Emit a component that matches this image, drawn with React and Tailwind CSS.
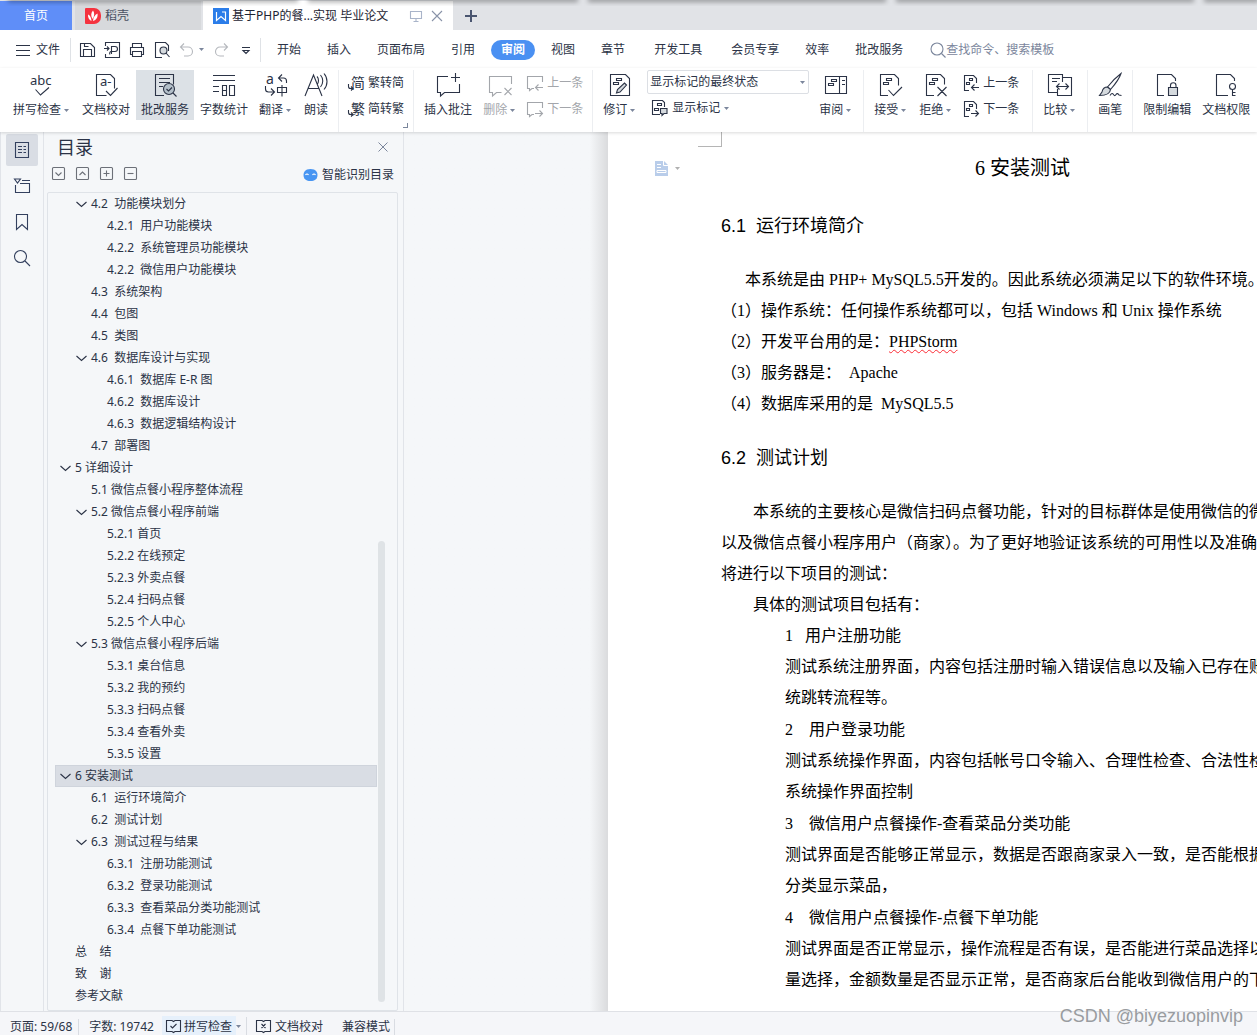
import React, { useState } from 'react';

const UI_FONT = "font-['Noto_Sans','Noto_Sans_CJK_SC',sans-serif]";

const Caret = ({ className = 'text-[#7b869c]' }) => (
  <svg width="5" height="3" viewBox="0 0 5 3" className={`shrink-0 ${className}`} fill="currentColor">
    <path d="M0 0h5L2.5 3z" />
  </svg>
);

const Icon = ({ size = 24, children, className = '' }) => (
  <svg
    width={size}
    height={size}
    viewBox={`0 0 ${size} ${size}`}
    fill="none"
    stroke="currentColor"
    strokeWidth="1.1"
    className={`shrink-0 overflow-visible ${className}`}
    aria-hidden="true"
  >
    {children}
  </svg>
);

const SvgText = ({ x, y, size, children }) => (
  <text x={x} y={y} fontSize={size} fill="currentColor" stroke="none" className="font-['Noto_Sans','Noto_Sans_CJK_SC',sans-serif]">
    {children}
  </text>
);

// ---- 24px ribbon icons ----
const SpellIcon = () => (
  <Icon>
    <SvgText x="0" y="12" size="13">abc</SvgText>
    <path d="M5.5 16.5l5 5.5 8.5-7.5" />
  </Icon>
);
const ProofIcon = () => (
  <Icon>
    <path d="M12.5 22.5h-10V1.5h14l4 4v10" />
    <SvgText x="6" y="13" size="13">a-</SvgText>
    <path d="M12 18l4.5 4.5 7-7.5" />
  </Icon>
);
const CorrectIcon = () => (
  <Icon>
    <path d="M11 22.5H2.5V1.5h18v10M6 5.5h11M6 9.5h11M6 13.5h4" />
    <circle cx="16" cy="16" r="5.5" fill="#b3bfc9" />
    <path d="M13.5 16l2 2 3.5-3.5M20 20l3.5 3.5" />
  </Icon>
);
const CountIcon = () => (
  <Icon>
    <path d="M1 2.5h22M1 7.5h22M1 13.5h6M1 18.5h6M10.5 12.5h4v10h-4zM10.5 17.5h4M17.5 12.5h5v10h-5z" />
  </Icon>
);
const TranslateIcon = () => (
  <Icon>
    <SvgText x="2" y="11" size="14">a</SvgText>
    <path d="M18 1.5l-3.5 3.5 3.5 3.5M14.5 5h5a3 3 0 0 1 3 3v2M1.5 13v3a3 3 0 0 0 3 3H10M7 15.5l3.5 3.5L7 22.5M13.5 14.5h9v5h-9zM18 12v11.5" />
  </Icon>
);
const ReadIcon = () => (
  <Icon>
    <path d="M1 23L9.5 2 18 23M4 15.5h11M13 3.5c2 2 2 6 0 8M16.5 2c3 3.5 3 8.5 0 12M20 .5c4 4.5 4 11.5 0 16" />
  </Icon>
);
const AddCommentIcon = () => (
  <Icon>
    <path d="M12 3.5H1.5v16h3v3.5l4-3.5h15V11M19.5 0v9M15 4.5h9" />
  </Icon>
);
const DelCommentIcon = () => (
  <Icon>
    <path d="M23.5 11V3.5h-22v16h3v3.5l4-3.5h5M16.5 15l7 7M23.5 15l-7 7" />
  </Icon>
);
const ReviseIcon = () => (
  <Icon>
    <path d="M2.5 1.5h15l4 4v17h-19zM8.5 5.5h5v2h-5zM5.500 9.5h5v2h-5z" />
    <path d="M8.5 20l1-3.500 7-6.500 2 2-6.500 7z" fill="#d5dade" />
  </Icon>
);
const PaneIcon = () => (
  <Icon>
    <path d="M1.5 3.5h21v17h-21zM15.5 3.5v17M18 7.5h3M18 11.5h3M7.5 6.5h5v2h-5zM4.5 10.5h5v2h-5z" />
  </Icon>
);
const AcceptIcon = () => (
  <Icon>
    <path d="M9 22.5H1.5V1.5h14l4 4v7M7.5 5.5h5v2h-5zM4.5 9.5h5v2h-5zM9.5 17l5 5.5 8.5-8.5" />
  </Icon>
);
const RejectIcon = () => (
  <Icon>
    <path d="M10 22.5H2.5V1.5h14l4 4v6M8.5 5.5h5v2h-5zM5.5 9.5h5v2h-5zM13.5 14l9 9M22.5 14l-9 9" />
  </Icon>
);
const CompareIcon = () => (
  <Icon>
    <path d="M9 19.5H.5v-18h14V5M14.5 9V4.5h9v18h-14V16M4 5.5h8M4 8.5h5M8.5 13.5h12M11.5 10.5l-3 3 3 3M17.5 10.5l3 3-3 3" />
  </Icon>
);
const BrushIcon = () => (
  <Icon>
    <path d="M23 .5c-4 3-10 9-13.5 13.5l3 2.5C16.5 12 21.5 5 23 .5z" />
    <path d="M9.5 14c-3 0-5 2.5-5.5 5L1.500 22.500c5 0 10.500-1 11-6z" fill="#d5dade" />
    <path d="M12 22.500c1.500-2.500 2.500-2.500 3.500-1s1.500 1.500 2.500 0 2-1 3 .5l2.500.5" />
  </Icon>
);
const LockDocIcon = () => (
  <Icon>
    <path d="M9 22.5H2.5v-21h14l4 4V8M15.5 15v-2.5a2.5 2.5 0 0 1 5.5 0V15" />
    <path d="M13.5 14.5h9v8h-9z" fill="#d5dade" />
  </Icon>
);
const KeyDocIcon = () => (
  <Icon>
    <path d="M14 22.5H2.5v-21h14l4 4V8" />
    <circle cx="18.5" cy="13.5" r="3" />
    <path d="M18.5 16.5v6.500M18.5 19.5h3M18.5 22.5h3" />
  </Icon>
);

// ---- 16px icons ----
const ConvertIcon = ({ char }) => (
  <Icon size={16}>
    <SvgText x="3" y="13" size="14">{char}</SvgText>
    <path d="M.5 9v2.5a2 2 0 0 0 2 2H5M3 11.5l2 2-2 2" />
  </Icon>
);
const CommentNav = ({ next }) => (
  <Icon size={16}>
    <path d="M15.5 7V1.5H.5v12h2v2l2.5-2h2" />
    <path d={next ? 'M8 12.5h7.5M12.5 9.5l3 3-3 3' : 'M8.5 12.5H16M11.5 9.5l-3 3 3 3'} />
  </Icon>
);
const RevisionNav = ({ next }) => (
  <Icon size={16}>
    <path d="M6 15.5H1.5V.5h9l3 3V8M6.5 3.5h3v2h-3zM3.5 7.5h3v2h-3z" />
    <path d={next ? 'M8 12.5h7.5M12.5 9.5l3 3-3 3' : 'M8.5 12.5H16M11.5 9.5l-3 3 3 3'} />
  </Icon>
);
const MarkIcon = () => (
  <Icon size={16}>
    <path d="M8 14.5H.5V.5h10l2 2V7M5.5 3.5h4v2h-4zM2.5 8.5h4v2h-4z" />
    <path d="M8.5 8.500h6.500v5h-3l-2 2v-2H8.500z" fill="#d5dade" />
  </Icon>
);

const BigButton = ({ icon, label, caret, active, disabled }) => (
  <button
    disabled={disabled}
    className={`flex h-[50px] flex-col items-center gap-[5px] px-[5px] pt-[3px] whitespace-nowrap ${
      active ? 'bg-[#dce1e6]' : ''
    } ${disabled ? 'text-[#a3a6ab]' : ''}`}
  >
    {icon}
    <span className="flex items-center text-xs leading-4">
      {label}
      {caret && (
        <span className="mr-[2px] ml-[3px]">
          <Caret />
        </span>
      )}
    </span>
  </button>
);

const SmallButton = ({ icon, label, caret, disabled }) => (
  <button
    disabled={disabled}
    className={`flex h-[26px] items-center gap-1 text-xs whitespace-nowrap ${disabled ? 'text-[#a3a6ab]' : ''}`}
  >
    {icon}
    {label}
    {caret && <Caret />}
  </button>
);

const Separator = () => <div className="mx-1 h-[62px] w-px shrink-0 bg-[#eceef1]" />;

const TitleBar = () => (
  <header className="relative flex h-[30px] shrink-0 bg-[#e1e3e7] pt-px text-xs">
    <button className="mr-[3px] w-[72px] bg-[#5f8ef8] text-white">首页</button>
    <button className="mr-[2px] flex w-[126px] items-center gap-1 bg-[#d7d9dc] pl-[10px] text-[#4a5163]">
      <svg width="16" height="16" viewBox="0 0 16 16" aria-hidden="true">
        <path d="M1 0h8a7 7 0 0 1 7 7v2a7 7 0 0 1-7 7H1a1 1 0 0 1-1-1V1a1 1 0 0 1 1-1z" fill="#f5333f" />
        <path d="M8 2.5c1.500 2 1.800 5-.3 8.500-2-2.500-2-6 .3-8.500zM3 6.500c2 .8 3.300 3 3.500 6.500C4 12 2.800 9.500 3 6.500zM12.500 5.500c.6 3.500-1 6.500-4.500 7.500.2-3.500 1.800-6 4.500-7.500z" fill="#fff" />
      </svg>
      稻壳
    </button>
    <div className="flex w-[250px] items-center bg-white pl-[10px] text-[#1d2433]">
      <svg width="16" height="16" viewBox="0 0 16 16" className="mr-[3px] shrink-0" aria-hidden="true">
        <path d="M0 0h16v16H0z" fill="#2b7de9" />
        <path d="M3.500 4v8.500L8 8.500l4.500 4V4H9" fill="none" stroke="#fff" strokeWidth="1.200" />
      </svg>
      <span className="whitespace-nowrap">基于PHP的餐...实现 毕业论文</span>
      <button className="ml-auto text-[#a9b4c9]" aria-label="窗口">
        <Icon size={12}>
          <path d="M.5 1.5h11v7H.5zM6 8.5v3M3.5 11.5h5" />
        </Icon>
      </button>
      <button className="mr-[10px] ml-[9px] text-[#8993a8]" aria-label="关闭">
        <Icon size={12}>
          <path d="M1 1l10 10M11 1L1 11" />
        </Icon>
      </button>
    </div>
    <button className="ml-3 text-[#4a5570]" aria-label="新建">
      <Icon size={12}>
        <path d="M6 0v12M0 6h12" strokeWidth="2" />
      </Icon>
    </button>
    {/* shadow cast by the windows above */}
    <div className="pointer-events-none absolute inset-x-0 top-0 flex h-[6px] gap-[14px] overflow-hidden pl-[10px]">
      <span className="-mt-px h-px w-[286px] shadow-[0_0_5px_2px_rgba(0,0,0,0.35)]" />
      <span className="-mt-px h-px w-[266px] shadow-[0_0_5px_2px_rgba(0,0,0,0.35)]" />
      <span className="-mt-px h-px w-[294px] shadow-[0_0_5px_2px_rgba(0,0,0,0.35)]" />
      <span className="-mt-px h-px w-[294px] shadow-[0_0_5px_2px_rgba(0,0,0,0.35)]" />
      <span className="-mt-px h-px flex-1 shadow-[0_0_5px_2px_rgba(0,0,0,0.35)]" />
    </div>
  </header>
);

const menus = ['开始', '插入', '页面布局', '引用', '审阅', '视图', '章节', '开发工具', '会员专享', '效率', '批改服务'];

const MenuBar = () => {
  const [current, setCurrent] = useState('审阅');
  return (
    <nav className="flex h-[38px] shrink-0 items-center bg-white pt-px text-xs">
      <button className="flex items-center gap-[5px] pr-[10px] pl-[15px]">
        <Icon size={16}>
          <path d="M1 3.5h14M1 8.5h14M1 13.5h14" />
        </Icon>
        文件
      </button>
      <div className="h-6 w-px bg-[#dfe2e6]" />
      <div className="flex items-center gap-[9px] pr-[6px] pl-2">
        <button aria-label="保存">
          <Icon size={16}>
            <path d="M1.5 1.5h10l4 4v9h-14zM4.5 14.5v-7h8v7M5.5 1.5v3h4" />
          </Icon>
        </button>
        <button aria-label="输出为PDF">
          <Icon size={16}>
            <path d="M1.5 4V.5h14v15h-14V12M0 6.5h5M3 4.5l2 2-2 2M7.5 12V4.5h3.5a2.5 2.5 0 0 1 0 5H7a2 2 0 0 0-1 3" />
          </Icon>
        </button>
        <button aria-label="打印">
          <Icon size={16}>
            <path d="M3.5 5.5v-4h9v4M3.5 12.5h-2v-7h13v7h-2M3.5 9.5h9v5h-9z" />
          </Icon>
        </button>
        <button aria-label="打印预览">
          <Icon size={16}>
            <path d="M8 15.5H1.5V.5h10l3 3V9" />
            <circle cx="9.5" cy="8.5" r="3.5" fill="#d5dade" />
            <path d="M12 11l3.500 4" />
          </Icon>
        </button>
        <button className="flex items-center gap-1 text-[#b5b8bd]" aria-label="撤销">
          <Icon size={16}>
            <path d="M5 1.5L1.500 5 5 8.5M1.500 5H9a4.500 4.500 0 0 1 0 9H5" />
          </Icon>
          <Caret />
        </button>
        <button className="text-[#b5b8bd]" aria-label="恢复">
          <Icon size={16}>
            <path d="M11 1.5L14.500 5 11 8.5M14.500 5H7a4.500 4.500 0 0 0 0 9h4" />
          </Icon>
        </button>
        <button aria-label="自定义快速访问工具栏">
          <Icon size={16}>
            <path d="M4 5.5h8M5 8.5l3 3 3-3z" />
          </Icon>
        </button>
      </div>
      <div className="h-6 w-px bg-[#dfe2e6]" />
      <div className="ml-[6px] flex gap-[6px]">
        {menus.map((name) => (
          <button
            key={name}
            onClick={() => setCurrent(name)}
            className={`h-5 rounded-full px-[10px] whitespace-nowrap ${
              name === current ? 'bg-[#4a90f2] font-bold text-white' : ''
            } ${name === '开发工具' ? 'mx-[3px]' : ''}`}
          >
            {name}
          </button>
        ))}
      </div>
      <label className="ml-[17px] flex items-center text-[#7b869c]">
        <Icon size={16}>
          <circle cx="7" cy="7" r="6" />
          <path d="M11.5 11.5l4 4" />
        </Icon>
        <input
          aria-label="查找"
          placeholder="查找命令、搜索模板"
          className="w-[130px] bg-transparent outline-none placeholder:text-[#7b869c] placeholder:opacity-100"
        />
      </label>
    </nav>
  );
};

const Ribbon = () => (
  <div className="relative z-10 flex h-16 shrink-0 items-start gap-px bg-white pt-[2px] pl-2 shadow-[0_1px_3px_rgba(0,0,0,0.15)]">
    <BigButton icon={<SpellIcon />} label="拼写检查" caret />
    <BigButton icon={<ProofIcon />} label="文档校对" />
    <BigButton icon={<CorrectIcon />} label="批改服务" active />
    <BigButton icon={<CountIcon />} label="字数统计" />
    <BigButton icon={<TranslateIcon />} label="翻译" caret />
    <BigButton icon={<ReadIcon />} label="朗读" />
    <Separator />
    <div className="relative px-1">
      <SmallButton icon={<ConvertIcon char="简" />} label="繁转简" />
      <SmallButton icon={<ConvertIcon char="繁" />} label="简转繁" />
      <span className="absolute right-0 -bottom-[6px] h-[5px] w-[5px] border-r border-b border-[#7b869c]" />
    </div>
    <Separator />
    <BigButton icon={<AddCommentIcon />} label="插入批注" />
    <BigButton icon={<DelCommentIcon />} label="删除" caret disabled />
    <div className="px-1">
      <SmallButton icon={<CommentNav />} label="上一条" disabled />
      <SmallButton icon={<CommentNav next />} label="下一条" disabled />
    </div>
    <Separator />
    <BigButton icon={<ReviseIcon />} label="修订" caret />
    <div className="px-1">
      <div className="relative mb-px flex w-[162px] items-center">
        <select
          aria-label="显示状态"
          className="h-6 w-full appearance-none rounded-xs border border-[#dcdfe4] bg-white pl-[2px] text-xs outline-none"
        >
          <option>显示标记的最终状态</option>
          <option>最终状态</option>
          <option>原始状态</option>
        </select>
        <span className="pointer-events-none absolute right-1">
          <Caret />
        </span>
      </div>
      <div className="pl-[5px]">
        <SmallButton icon={<MarkIcon />} label="显示标记" caret />
      </div>
    </div>
    <BigButton icon={<PaneIcon />} label="审阅" caret />
    <Separator />
    <BigButton icon={<AcceptIcon />} label="接受" caret />
    <BigButton icon={<RejectIcon />} label="拒绝" caret />
    <div className="pr-2 pl-1">
      <SmallButton icon={<RevisionNav />} label="上一条" />
      <SmallButton icon={<RevisionNav next />} label="下一条" />
    </div>
    <Separator />
    <BigButton icon={<CompareIcon />} label="比较" caret />
    <Separator />
    <BigButton icon={<BrushIcon />} label="画笔" />
    <Separator />
    <BigButton icon={<LockDocIcon />} label="限制编辑" />
    <BigButton icon={<KeyDocIcon />} label="文档权限" />
  </div>
);

const SideRail = () => (
  <aside className="flex w-11 shrink-0 flex-col items-center gap-1 border-x border-[#e1e4e9] pt-[2px] text-[#33405e]">
    <button className="grid h-8 w-8 place-items-center rounded-xs bg-[#d9dde4]" aria-label="目录">
      <Icon size={16}>
        <path d="M1.5 .5h13v15h-13zM4 4.5h4M4 7.5h4M4 10.5h4M9.5 4.5h2.500M9.5 7.5h2.500M9.5 10.5h2.500" />
      </Icon>
    </button>
    <button className="grid h-8 w-8 place-items-center" aria-label="章节">
      <Icon size={16}>
        <path d="M.5 1h6l-3 4zM8 2.5h8M1.5 7v7.500h14v-9H6" />
      </Icon>
    </button>
    <button className="grid h-8 w-8 place-items-center" aria-label="书签">
      <Icon size={16}>
        <path d="M2.5 .5h11v15L8 10.5l-5.500 5z" />
      </Icon>
    </button>
    <button className="grid h-8 w-8 place-items-center" aria-label="查找">
      <Icon size={16}>
        <circle cx="6.5" cy="6.5" r="6" />
        <path d="M11 11l5 5" />
      </Icon>
    </button>
  </aside>
);

const outline = [
  { level: 2, text: '4.2  功能模块划分', open: true },
  { level: 3, text: '4.2.1  用户功能模块' },
  { level: 3, text: '4.2.2  系统管理员功能模块' },
  { level: 3, text: '4.2.2  微信用户功能模块' },
  { level: 2, text: '4.3  系统架构' },
  { level: 2, text: '4.4  包图' },
  { level: 2, text: '4.5  类图' },
  { level: 2, text: '4.6  数据库设计与实现', open: true },
  { level: 3, text: '4.6.1  数据库 E-R 图' },
  { level: 3, text: '4.6.2  数据库设计' },
  { level: 3, text: '4.6.3  数据逻辑结构设计' },
  { level: 2, text: '4.7  部署图' },
  { level: 1, text: '5 详细设计', open: true },
  { level: 2, text: '5.1 微信点餐小程序整体流程' },
  { level: 2, text: '5.2 微信点餐小程序前端', open: true },
  { level: 3, text: '5.2.1 首页' },
  { level: 3, text: '5.2.2 在线预定' },
  { level: 3, text: '5.2.3 外卖点餐' },
  { level: 3, text: '5.2.4 扫码点餐' },
  { level: 3, text: '5.2.5 个人中心' },
  { level: 2, text: '5.3 微信点餐小程序后端', open: true },
  { level: 3, text: '5.3.1 桌台信息' },
  { level: 3, text: '5.3.2 我的预约' },
  { level: 3, text: '5.3.3 扫码点餐' },
  { level: 3, text: '5.3.4 查看外卖' },
  { level: 3, text: '5.3.5 设置' },
  { level: 1, text: '6 安装测试', open: true },
  { level: 2, text: '6.1  运行环境简介' },
  { level: 2, text: '6.2  测试计划' },
  { level: 2, text: '6.3  测试过程与结果', open: true },
  { level: 3, text: '6.3.1  注册功能测试' },
  { level: 3, text: '6.3.2  登录功能测试' },
  { level: 3, text: '6.3.3  查看菜品分类功能测试' },
  { level: 3, text: '6.3.4  点餐下单功能测试' },
  { level: 1, text: '总    结' },
  { level: 1, text: '致    谢' },
  { level: 1, text: '参考文献' },
];

const indents = { 1: 'pl-1', 2: 'pl-5', 3: 'pl-9' };

const OutlinePanel = () => {
  const [selected, setSelected] = useState('6 安装测试');
  return (
    <section className="flex w-[360px] shrink-0 flex-col border-r border-[#e1e4e9] pr-[5px] pl-[3px]">
      <div className="flex h-[30px] items-center justify-between pr-[9px] pl-[10px]">
        <h2 className="text-lg">目录</h2>
        <button className="text-[#7b869c]" aria-label="关闭目录">
          <Icon size={12}>
            <path d="M1.5 1.5l9 9M10.5 1.5l-9 9" strokeWidth="1" />
          </Icon>
        </button>
      </div>
      <div className="flex h-[30px] items-start justify-between pt-1 pr-1 pl-[5px]">
        <div className="flex gap-[10px] pt-px text-[#6c7078]">
          {[
            ['全部展开', 'M4 6l3 3 3-3'],
            ['全部收起', 'M4 8.5l3-3 3 3'],
            ['展开一级', 'M4 7h6M7 4v6'],
            ['收起一级', 'M4 7h6'],
          ].map(([name, d]) => (
            <button key={name} aria-label={name}>
              <Icon size={14}>
                <rect x=".5" y=".5" width="12" height="12" rx="1" />
                <path d={d} transform="translate(-.5 -.5)" />
              </Icon>
            </button>
          ))}
        </div>
        <button className="flex items-center gap-1 text-xs leading-[18px]">
          <svg width="15" height="14" viewBox="0 0 15 14" aria-hidden="true">
            <path d="M4 1.500Q7.500 .5 11 1.500 14.500 3 14.500 7T11 12.500Q7.500 13.500 4 12.500.5 11 .5 7T4 1.500z" fill="#4795f2" />
            <path d="M2.500 7q1.500-2 3 0M9.500 7q1.500-2 3 0" fill="none" stroke="#fff" strokeWidth="1.200" />
          </svg>
          智能识别目录
        </button>
      </div>
      <div className="flex min-h-0 flex-1 rounded-xs border border-[#dfe3e8]">
        <ul className="min-w-0 flex-1 overflow-hidden pl-[7px]">
          {outline.map((item, i) => (
            <li key={i}>
              <button
                onClick={() => setSelected(item.text)}
                className={`flex h-[22px] w-full items-center text-left text-xs leading-5 ${indents[item.level]} ${
                  item.text === selected ? 'border border-[#cfd4dc] bg-[#d9dde4]' : 'border border-transparent'
                }`}
              >
                <span className="w-[15px] shrink-0">
                  {item.open && (
                    <Icon size={12}>
                      <path d="M.5 4l5 4.500 5-4.500" />
                    </Icon>
                  )}
                </span>
                <span className="whitespace-pre">{item.text}</span>
              </button>
            </li>
          ))}
        </ul>
        <div className="flex w-5 flex-col justify-end pb-2 pl-px">
          <div className="h-[57%] w-[7px] rounded-full bg-[#dfe3e6]" />
        </div>
      </div>
    </section>
  );
};

const tests = [
  {
    title: '1   用户注册功能',
    lines: ['测试系统注册界面，内容包括注册时输入错误信息以及输入已存在账', '统跳转流程等。'],
  },
  {
    title: '2    用户登录功能',
    lines: ['测试系统操作界面，内容包括帐号口令输入、合理性检查、合法性检', '系统操作界面控制'],
  },
  {
    title: '3    微信用户点餐操作-查看菜品分类功能',
    lines: ['测试界面是否能够正常显示，数据是否跟商家录入一致，是否能根据', '分类显示菜品，'],
  },
  {
    title: '4    微信用户点餐操作-点餐下单功能',
    lines: ['测试界面是否正常显示，操作流程是否有误，是否能进行菜品选择以', '量选择，金额数量是否显示正常，是否商家后台能收到微信用户的下'],
  },
];

const Heading = ({ children, className = '' }) => (
  <h3
    className={`mb-[23px] font-['Liberation_Sans','Noto_Sans_CJK_SC',sans-serif] text-lg leading-[30px] ${className}`}
  >
    {children}
  </h3>
);

const DocumentView = () => (
  <main className="flex min-w-0 flex-1 overflow-hidden bg-[#f5f7f9]">
    <div className="w-[204px] shrink-0 bg-linear-to-r from-[#f5f7f9] from-91% to-[#dadbdd]" />
    <article className="w-[829px] shrink-0 bg-white font-['Liberation_Serif','Noto_Sans_CJK_SC',serif] text-base leading-[31px] whitespace-pre text-black">
      <div className="ml-[90px] h-[15px] w-6 border-r border-b border-[#b5b5b5]" />
      <div className="mt-[6px] grid grid-cols-[113px_1fr_113px]">
        <button className="flex items-center gap-[7px] self-center pl-[47px]" aria-label="段落布局">
          <svg width="13" height="15" viewBox="0 0 13 15" aria-hidden="true">
            <path d="M0 0h9l4 4v11H0z" fill="#b9cdea" />
            <path d="M2 3.5h4M2 6.5h4M2 9.5h9v2H2zM8.5 0v4.500H13" fill="none" stroke="#fff" />
          </svg>
          <Caret className="text-[#b0b0b0]" />
        </button>
        <h2 className="text-center text-xl leading-[30px]">6 安装测试</h2>
      </div>
      <div className="px-[113px]">
        <Heading className="mt-7">6.1  运行环境简介</Heading>
        <p className="pl-6">本系统是由 PHP+ MySQL5.5开发的。因此系统必须满足以下的软件环境。</p>
        <p>（1）操作系统：任何操作系统都可以，包括 Windows 和 Unix 操作系统</p>
        <p>
          （2）开发平台用的是：
          <span className="underline decoration-red-500 decoration-wavy decoration-1 underline-offset-2">PHPStorm</span>
        </p>
        <p>（3）服务器是：  Apache</p>
        <p>（4）数据库采用的是  MySQL5.5</p>
        <Heading className="mt-6">6.2  测试计划</Heading>
        <p className="pl-8">本系统的主要核心是微信扫码点餐功能，针对的目标群体是使用微信的微</p>
        <p>以及微信点餐小程序用户（商家）。为了更好地验证该系统的可用性以及准确</p>
        <p>将进行以下项目的测试：</p>
        <p className="pl-8">具体的测试项目包括有：</p>
        <ol className="space-y-px pl-16">
          {tests.map((t) => (
            <li key={t.title}>
              <p>{t.title}</p>
              {t.lines.map((line) => (
                <p key={line}>{line}</p>
              ))}
            </li>
          ))}
        </ol>
      </div>
    </article>
  </main>
);

const StatusBar = () => (
  <footer className="relative flex h-6 shrink-0 items-center border-t border-[#dfe1e6] bg-[#f5f6f9] pt-[6px] text-xs whitespace-nowrap">
    <span className="border-r border-[#d9dce2] pr-[6px] pl-[10px] leading-4">页面: 59/68</span>
    <span className="pr-2 pl-[10px] leading-4">字数: 19742</span>
    <button className="flex h-[22px] items-center gap-[3px] bg-[#e6f0fb] px-1">
      <Icon size={15}>
        <path d="M6 1.5H.5v11H6l1.500 1 1.500-1h5.500v-11H9l-1.500 1zM4.5 7l2 2 4-4" />
      </Icon>
      拼写检查
    </button>
    <span className="border-r border-[#d9dce2] py-2 pr-[5px]">
      <Caret />
    </span>
    <button className="flex items-center gap-1 pl-[9px]">
      <Icon size={15}>
        <path d="M6 1.5H.5v11H6l1.500 1 1.500-1h5.500v-11H9l-1.500 1zM5.5 5l4 4M9.5 5l-4 4" />
      </Icon>
      文档校对
    </button>
    <span className="ml-[19px] border-r border-[#d9dce2] pr-1 leading-4">兼容模式</span>
    <span className="pointer-events-none absolute right-[14px] bottom-[5px] font-['Liberation_Sans',sans-serif] text-lg leading-7 text-[#999ca0]">
      CSDN @biyezuopinvip
    </span>
  </footer>
);

const App = () => (
  <div className={`flex h-screen flex-col overflow-hidden bg-[#f5f7f9] text-[#2b3346] ${UI_FONT}`}>
    <TitleBar />
    <MenuBar />
    <Ribbon />
    <div className="flex min-h-0 flex-1">
      <SideRail />
      <OutlinePanel />
      <DocumentView />
    </div>
    <StatusBar />
  </div>
);

export default App;
